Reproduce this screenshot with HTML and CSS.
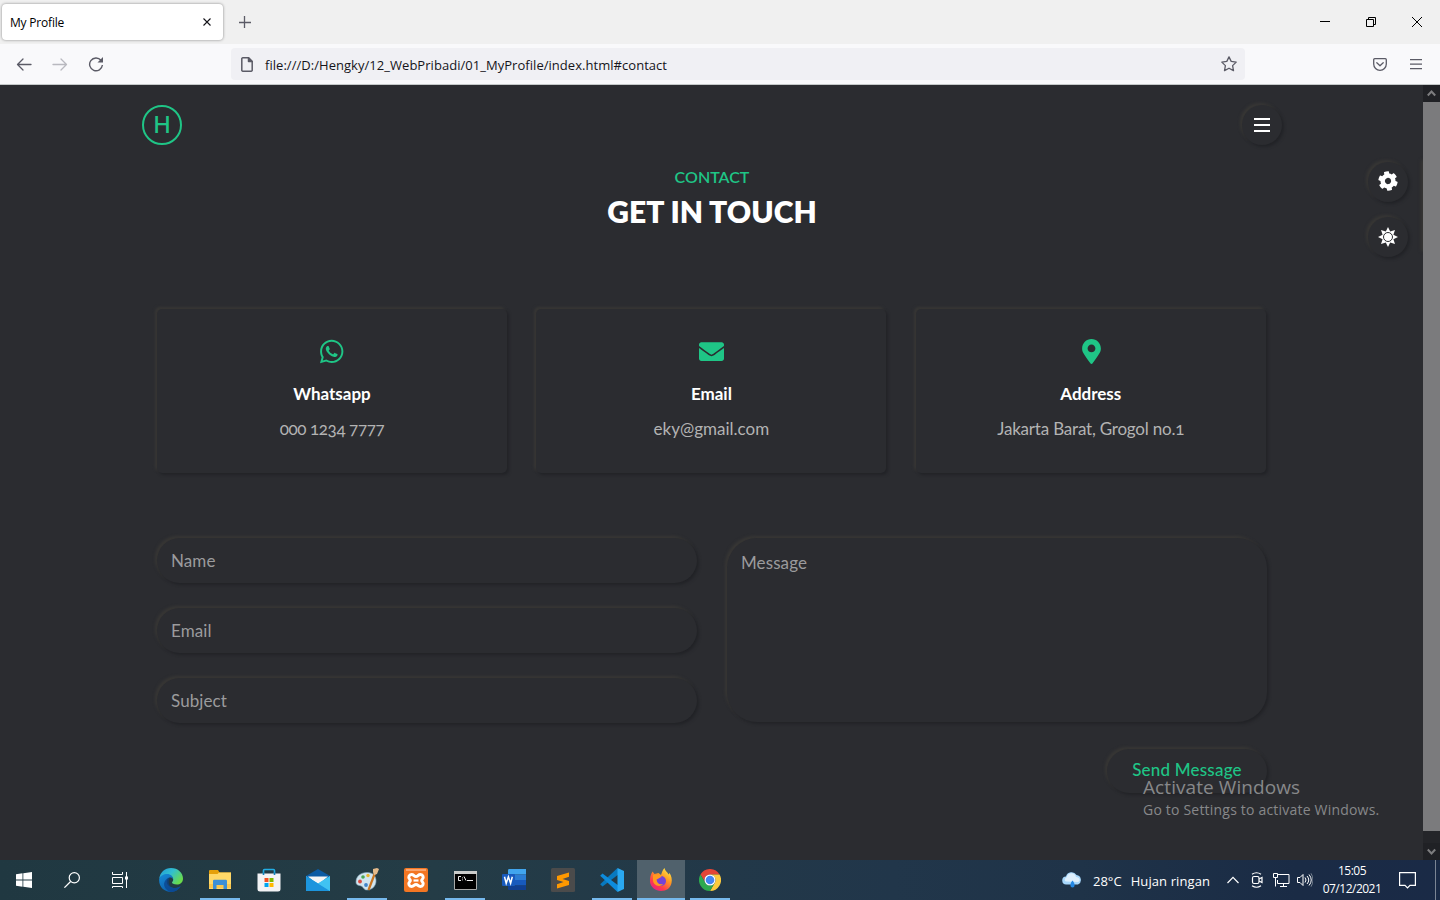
FILE: index.html
```html
<!DOCTYPE html>
<html lang="en">
<head>
<meta charset="utf-8">
<title>My Profile</title>
<link rel="stylesheet" href="styles.css">
</head>
<body>
<div class="tabbar">
  <div class="tab"><span class="tab-title">My Profile</span>
    <svg width="8" height="8" viewBox="0 0 8 8" stroke="#15141a" stroke-width="1.1"><path d="M.5.5l7 7M7.5.5l-7 7"/></svg>
  </div>
  <svg class="newtab" width="12" height="12" viewBox="0 0 12 12" stroke="#5b5b66" stroke-width="1.3"><path d="M5.500 0v12M0 6.500h12"/></svg>
  <div class="wincontrols">
    <svg width="10" height="10" viewBox="0 0 10 10" fill="none" stroke="#000"><path d="M0 4.5h10"/></svg>
    <svg width="10" height="10" viewBox="0 0 10 10" fill="none" stroke="#000"><path d="M.5 2.5h7v7h-7zM2.5 2.500v-2h7v7h-2"/></svg>
    <svg width="10" height="10" viewBox="0 0 10 10" fill="none" stroke="#000"><path d="M0 0l10 10M10 0L0 10"/></svg>
  </div>
</div>
<div class="toolbar">
  <div class="nav">
    <svg width="16" height="16" viewBox="0 0 16 16" fill="none" stroke="#5b5b66" stroke-width="1.3" stroke-linecap="round" stroke-linejoin="round"><path d="M15 8.500H1.500M7 3L1.500 8.500 7 14"/></svg>
    <svg width="16" height="16" viewBox="0 0 16 16" fill="none" stroke="#b9b9bf" stroke-width="1.3" stroke-linecap="round" stroke-linejoin="round"><path d="M1 8.500h13.500M9 3l5.500 5.500L9 14"/></svg>
    <svg width="16" height="16" viewBox="0 0 16 16" fill="none" stroke="#5b5b66" stroke-width="1.4"><path d="M13 4.300A6.400 6.400 0 1 0 14.400 9"/><path d="M15 1v5.500H9.500z" fill="#5b5b66" stroke="none"/></svg>
  </div>
  <div class="urlbar">
    <svg width="12" height="15" viewBox="0 0 12 15" fill="none" stroke="#5b5b66" stroke-width="1.5" stroke-linejoin="round"><path d="M.8 2a1 1 0 0 1 1-1.200H7.500L11.200 4.500V13a1 1 0 0 1-1 1.200H1.800a1 1 0 0 1-1-1.200z"/><path d="M7.500.8v3.700h3.700z" fill="#5b5b66"/></svg>
    <span class="url">file:///D:/Hengky/12_WebPribadi/01_MyProfile/index.html#contact</span>
    <svg class="star" width="16" height="16" viewBox="0 0 16 16" fill="none" stroke="#5b5b66" stroke-width="1.3" stroke-linejoin="round"><path d="M8 .9l2.200 4.500 5 .7-3.600 3.500.9 5L8 12.200 3.500 14.600l.9-5L.8 6.100l5-.7z"/></svg>
  </div>
  <div class="tools">
    <svg width="14" height="13" viewBox="0 0 14 13" fill="none" stroke="#5b5b66" stroke-width="1.300" stroke-linecap="round" stroke-linejoin="round"><path d="M1.700.7h10.600a1 1 0 0 1 1 1V6a6.300 6.300 0 0 1-12.600 0V1.700a1 1 0 0 1 1-1z"/><path d="M3.800 4.800L7 7.800l3.200-3"/></svg>
    <svg width="12" height="11" viewBox="0 0 12 11" stroke="#5b5b66" stroke-width="1.300"><path d="M0 .7h12M0 5.200h12M0 9.700h12"/></svg>
  </div>
</div>
<div class="viewport">
  <main class="page">
    <header class="header">
      <div class="logo">H</div>
      <div class="round"><span class="burger"></span></div>
    </header>
    <div class="heading"><p class="eyebrow">CONTACT</p><h1>GET IN TOUCH</h1></div>
    <section class="cards">
      <article class="card">
        <svg width="24" height="27" viewBox="0 0 460 512" fill="#1fc586"><path d="M380.900 97.100C339 55.100 283.200 32 223.900 32c-122.400 0-222 99.600-222 222 0 39.100 10.200 77.300 29.600 111L0 480l117.700-30.900c32.400 17.700 68.900 27 106.100 27h.1c122.300 0 224.100-99.600 224.100-222 0-59.300-25.200-115-67.100-157zm-157 341.600c-33.200 0-65.700-8.900-94-25.700l-6.700-4-69.800 18.300L72 359.200l-4.400-7c-18.500-29.400-28.200-63.300-28.200-98.200 0-101.700 82.800-184.500 184.600-184.500 49.300 0 95.600 19.200 130.400 54.100 34.800 34.900 56.200 81.200 56.100 130.500 0 101.800-84.900 184.600-186.600 184.600zm101.200-138.200c-5.500-2.800-32.800-16.200-37.900-18-5.100-1.900-8.800-2.800-12.500 2.800-3.700 5.600-14.300 18-17.600 21.800-3.200 3.700-6.500 4.200-12 1.400-32.600-16.300-54-29.100-75.500-66-5.700-9.800 5.700-9.100 16.300-30.300 1.800-3.700.9-6.900-.5-9.700-1.400-2.800-12.500-30.100-17.100-41.200-4.500-10.800-9.100-9.300-12.500-9.500-3.200-.2-6.900-.2-10.600-.2-3.700 0-9.700 1.400-14.800 6.900-5.100 5.600-19.400 19-19.400 46.300 0 27.300 19.900 53.700 22.600 57.400 2.800 3.700 39.100 59.700 94.800 83.800 35.200 15.200 49 16.500 66.600 13.900 10.700-1.600 32.800-13.400 37.400-26.400 4.600-13 4.600-24.100 3.200-26.400-1.300-2.500-5-3.900-10.500-6.600z"/></svg>
        <h2 class="whatsapp">Whatsapp</h2><p class="phone">000 1234 7777</p>
      </article>
      <article class="card">
        <svg width="25" height="27" viewBox="0 0 512 512" fill="#1fc586"><path d="M502.300 190.800c3.900-3.100 9.700-.2 9.700 4.700V400c0 26.500-21.500 48-48 48H48c-26.500 0-48-21.500-48-48V195.600c0-5 5.700-7.800 9.700-4.700 22.400 17.400 52.100 39.500 154.100 113.600 21.100 15.400 56.700 47.800 92.200 47.600 35.700.3 72-32.800 92.300-47.600 102-74.100 131.600-96.300 154-113.700zM256 320c23.200.4 56.600-29.200 73.400-41.400 132.700-96.300 142.800-104.700 173.400-128.700 5.800-4.500 9.200-11.500 9.200-18.900v-19c0-26.500-21.500-48-48-48H48c-26.500 0-48 21.500-48 48v19c0 7.400 3.400 14.300 9.200 18.900 30.600 23.900 40.700 32.400 173.400 128.700 16.800 12.200 50.200 41.800 73.400 41.400z"/></svg>
        <h2>Email</h2><p>eky@gmail.com</p>
      </article>
      <article class="card">
        <svg width="20" height="25" viewBox="-20 0 404 512" class="pin" fill="#1fc586"><path d="M172.300 501.700C27 291 0 269.400 0 192 0 86 86 0 192 0s192 86 192 192c0 77.400-27 99-172.300 309.700-9.500 13.800-29.900 13.800-39.400 0zM192 272c44.200 0 80-35.800 80-80s-35.800-80-80-80-80 35.800-80 80 35.800 80 80 80z"/></svg>
        <h2>Address</h2><p class="street">Jakarta Barat, Grogol no.<span class="old">1</span></p>
      </article>
    </section>
    <form class="form">
      <div class="fields">
        <div class="field">Name</div><div class="field">Email</div><div class="field">Subject</div>
      </div>
      <div class="message">Message</div>
    </form>
    <div class="actions"><div class="send">Send Message</div></div>
    <div class="switches">
      <div class="round gear"><svg width="20" height="20" viewBox="0 0 512 512" fill="#fff"><path d="M487.400 315.700l-42.600-24.600c4.300-23.200 4.300-47 0-70.200l42.600-24.600c4.900-2.800 7.100-8.600 5.500-14-11.100-35.600-30-67.800-54.700-94.600-3.800-4.100-10-5.100-14.800-2.300L380.800 110c-17.900-15.400-38.500-27.300-60.800-35.100V25.800c0-5.600-3.900-10.500-9.400-11.700-36.700-8.200-74.300-7.800-109.200 0-5.500 1.200-9.400 6.100-9.400 11.700V75c-22.200 7.900-42.800 19.800-60.800 35.100L88.700 85.500c-4.900-2.800-11-1.900-14.800 2.300-24.700 26.700-43.600 58.900-54.700 94.600-1.700 5.400.6 11.200 5.500 14L67.300 221c-4.300 23.200-4.300 47 0 70.200l-42.600 24.600c-4.900 2.800-7.100 8.600-5.500 14 11.100 35.600 30 67.800 54.700 94.600 3.800 4.100 10 5.100 14.800 2.300l42.600-24.600c17.900 15.400 38.500 27.300 60.800 35.100v49.200c0 5.600 3.900 10.500 9.400 11.700 36.700 8.200 74.300 7.800 109.200 0 5.500-1.200 9.400-6.100 9.400-11.700v-49.200c22.200-7.900 42.800-19.800 60.800-35.100l42.600 24.600c4.900 2.800 11 1.900 14.800-2.300 24.700-26.700 43.600-58.900 54.700-94.600 1.500-5.500-.7-11.300-5.600-14.100zM256 336c-44.100 0-80-35.900-80-80s35.900-80 80-80 80 35.900 80 80-35.900 80-80 80z" transform="rotate(-10 256 256)"/></svg></div>
      <div class="round"><svg width="20" height="20" viewBox="0 0 20 20"><path fill="#fff" d="M10 0l2.200 4.600L17 3l-1.600 4.800L20 10l-4.600 2.200L17 17l-4.800-1.600L10 20l-2.200-4.600L3 17l1.600-4.800L0 10l4.600-2.200L3 3l4.800 1.600z"/><circle cx="10" cy="10" r="4.500" fill="#fff" stroke="#2b2c30"/></svg></div>
    </div>
    <div class="drawer"></div>
  </main>
  <div class="scrollbar">
    <div class="arrow"><svg width="9" height="7" viewBox="0 0 9 7" fill="none" stroke="#7d7d7f" stroke-width="2"><path d="M.8 5.500l3.700-4 3.700 4"/></svg></div>
    <div class="thumb"></div>
    <div class="arrow"><svg width="9" height="7" viewBox="0 0 9 7" fill="none" stroke="#7d7d7f" stroke-width="2"><path d="M.8 1.500l3.700 4 3.700-4"/></svg></div>
  </div>
</div>
<footer class="taskbar">
  <div class="apps">
    <div class="app"><svg width="16" height="16" viewBox="0 0 16 16" fill="#fff"><path d="M0 2.300L6.500 1.300v6.200H0zM7.300 1.200L16 0v7.500H7.300zM0 8.400h6.500v6.300L0 13.800zM7.300 8.400H16V16l-8.700-1.200z"/></svg></div>
    <div class="app"><svg width="16" height="16" viewBox="0 0 16 16" fill="none" stroke="#fff" stroke-width="1.200"><circle cx="10.300" cy="5.700" r="5.100"/><path d="M6.600 9.500L.4 15.700"/></svg></div>
    <div class="app"><svg width="16" height="16" viewBox="0 0 16 16" fill="none" stroke="#fff"><path d="M.5 0v2.500h10V0M.5 5.500h10v6H.5zM.5 16v-1.500h10V16M14.500 0v16"/><path d="M13 4.500h3v3h-3z" fill="#fff" stroke="none"/></svg></div>
    <div class="app"><svg width="24" height="24" viewBox="0 0 24 24"><defs><linearGradient id="eg" x1="0" y1="0" x2="1" y2=".6"><stop offset="0" stop-color="#2199d8"/><stop offset=".5" stop-color="#31bfd0"/><stop offset="1" stop-color="#69db4b"/></linearGradient><linearGradient id="eb" x1="0" y1="0" x2=".7" y2="1"><stop offset="0" stop-color="#168bd9"/><stop offset="1" stop-color="#0c59a4"/></linearGradient></defs><path fill="url(#eg)" d="M.2 11C.8 4.600 5.800 0 12 0c7 0 12 5 12 10.500 0 4-3 6-6 6-3.500 0-5-1.200-5-2 0-.6 1.200-1.200 1.200-3C14.200 8.500 11 7 8 7 4 7 1 9 .2 11z"/><path fill="url(#eb)" d="M.2 11C1 8 4.500 6 8.200 6c3.500 0 6 2.500 6 5.300-.6-1.200-1.700-1.800-3-1.800-2 0-3.500 2-3.500 4 0 4 4 6.500 8 6.500 2 0 4-.6 6-2C19.700 21.700 16 24 12 24 5 24-.5 18.500.2 11z"/><path fill="#0b438c" d="M11.200 9.500C8.500 12 9 20 15.500 20c2.500 0 4.500-.8 6.200-2-2 4-6 6.200-9.700 6-5-1.500-7.500-5.500-6.800-9 .6-3 3-5.300 6-5.500z" opacity=".75"/></svg></div>
    <div class="app open"><svg width="22" height="20" viewBox="0 0 22 20"><path fill="#e5a00b" d="M0 1a1 1 0 0 1 1-1h8l1.500 2.500H22V8H0z"/><path fill="#ffd868" d="M0 4h8.500L10 2.500h12V19H0z"/><path fill="#f9c64c" d="M0 14h22v4H0z"/><path fill="#3b8fd5" d="M4 11a1.200 1.200 0 0 1 1.200-1.200h11.600A1.200 1.200 0 0 1 18 11v8h-3.500v-4h-7v4H4z"/></svg></div>
    <div class="app"><svg width="24" height="24" viewBox="0 0 24 24"><path d="M6.500 8V2.500a1 1 0 0 1 1-1h9a1 1 0 0 1 1 1V8" fill="none" stroke="#22aee4" stroke-width="1.600"/><path fill="#f3f3f5" d="M.5 5.500h23V21a2.500 2.500 0 0 1-2.500 2.500H3A2.500 2.500 0 0 1 .5 21z"/><path d="M6.500 4.500V7M17.500 4.500V7" stroke="#1381b8" stroke-width="1.600"/><path fill="#f25022" d="M7.500 10H11.500v4h-4z"/><path fill="#7fba00" d="M12.500 10h4v4h-4z"/><path fill="#00a4ef" d="M7.500 15h4v4h-4z"/><path fill="#ffb900" d="M12.500 15h4v4h-4z"/></svg></div>
    <div class="app"><svg width="24" height="24" viewBox="0 0 24 24"><path fill="#0c5ba3" d="M0 8L12 1l12 7v6H0z"/><path fill="#f5f5f5" d="M2 8.500h20L12 17z"/><path fill="#32b7ed" d="M0 8l12 7.500L24 8v15H0z"/><path fill="#1c95dd" d="M0 8l24 15H0z"/><path fill="#4acbf5" d="M24 8L12 15.500 24 23z" opacity=".6"/></svg></div>
    <div class="app open"><svg width="24" height="24" viewBox="0 0 24 24"><path fill="#d2e5ef" stroke="#86a9bd" stroke-width=".6" d="M1 14C1 8 6 4.500 12 4.500c6 0 9 3.500 9 8.500s-4 9-9 9c-3 0-3-2-5-3.500S1 18 1 14z"/><circle cx="5" cy="13.500" r="1.900" fill="#d94b41"/><circle cx="8" cy="9" r="1.800" fill="#4aa654"/><circle cx="13" cy="7.500" r="1.700" fill="#eab52f"/><circle cx="11" cy="17" r="1.900" fill="#4084c9"/><path stroke="#c97521" stroke-width="2.200" d="M20 5l-6.500 17"/><path fill="#e3b98a" d="M18 1l4-1 2 1-2 5-3 1-1-3z"/></svg></div>
    <div class="app"><svg width="24" height="24" viewBox="0 0 24 24"><rect width="24" height="24" rx="2" fill="#f37623"/><path d="M2 2h20" stroke="#ffc5a0" stroke-width="1.200"/><path d="M7.500 6.500c2.500 0 2.500 2 4.500 2s2-2 4.500-2 3.500 3 2 4.500c-1 1-1 2 0 3 1.500 1.500.5 4.500-2 4.500s-2.500-2-4.500-2-2 2-4.500 2-3.500-3-2-4.500c1-1 1-2 0-3-1.500-1.500-.5-4.500 2-4.500z" fill="none" stroke="#fff" stroke-width="3"/><path d="M9.500 12.500h5" stroke="#fff" stroke-width="2.200"/></svg></div>
    <div class="app open"><svg width="23" height="19" viewBox="0 0 23 19"><path fill="#000" stroke="#a9aaa9" d="M.5.5h22v18H.5z"/><path fill="#c9cbca" d="M0 0h23v3H0z"/><path d="M7 5.500H4.500v4H7M8.500 6.500v.8M8.500 8.500v.8M10 5.500l2 4M13 9.500h6" fill="none" stroke="#eee"/></svg></div>
    <div class="app"><svg width="24" height="22" viewBox="0 0 24 22"><path fill="#41a5ee" d="M6 1.200A1.200 1.200 0 0 1 7.200 0H24v5.500H6z"/><path fill="#2b7cd3" d="M6 5.500h18V11H6z"/><path fill="#185abd" d="M6 11h18v5.500H6z"/><path fill="#103f91" d="M6 16.500h18V21H7a1 1 0 0 1-1-1z"/><path fill="#185abd" d="M1 5h11a1 1 0 0 1 1 1v10a1 1 0 0 1-1 1H1a1 1 0 0 1-1-1V6a1 1 0 0 1 1-1z"/><path d="M2.500 7.800l1.700 6.500 2.200-6.500 2.200 6.500 1.700-6.500" fill="none" stroke="#fff" stroke-width="1.500"/></svg></div>
    <div class="app"><svg width="24" height="24" viewBox="0 0 24 24"><rect width="24" height="24" rx="1.500" fill="#4b4b4b"/><path fill="#ff9800" d="M6 8L18 4.500v4.300L11.500 11 18 13v4L6 20.500v-4.300L12.500 14 6 12z"/></svg></div>
    <div class="app open"><svg width="24" height="24" viewBox="0 0 24 24"><path fill="#0879bf" d="M17.500 0L19 6 2.500 18.500.2 16.300z"/><path fill="#0d8bdc" d="M2.500 5.500L19 18l-1.500 6L.2 7.700z"/><path fill="#2aa9f2" d="M17.500 0L24 3v18l-6.500 3z"/></svg></div>
    <div class="app open active"><svg width="24" height="24" viewBox="0 0 24 24"><defs><linearGradient id="fx" x1=".9" y1="0" x2=".2" y2="1"><stop offset="0" stop-color="#fff44f"/><stop offset=".4" stop-color="#ff9a22"/><stop offset=".75" stop-color="#ff3b4c"/><stop offset="1" stop-color="#e3208b"/></linearGradient></defs><path fill="url(#fx)" d="M3.500 3.500L5.500 6l4-1L12 7c1-3 1.500-5 3.500-7 .5 3 3 4 4 6.500L20.500 5c2 3 2.800 6 2 10-1 5-5 8-10.500 8S1.500 19 1 14c-.3-4 .5-7 2.500-10.500z"/><circle cx="12" cy="13" r="5" fill="#7543d7"/><path fill="#ff9a1f" d="M4 7c4-1 7 0 9 2-2 0-3 1.500-5.500 2.500C8 15 10 17 14 16c-3 4-10 1.500-10-4z"/></svg></div>
    <div class="app open"><svg width="22" height="22" viewBox="0 0 24 24"><path fill="#e34537" d="M1.600 6A12 12 0 0 1 22.400 6H12a6 6 0 0 0-5.200 9z"/><path fill="#fbca3e" d="M22.400 6A12 12 0 0 1 12 24l5.200-9A6 6 0 0 0 12 6z"/><path fill="#2da94f" d="M12 24A12 12 0 0 1 1.600 6l5.200 9a6 6 0 0 0 10.400 0z"/><circle cx="12" cy="12" r="6" fill="#fff"/><circle cx="12" cy="12" r="4.700" fill="#4285f4"/></svg></div>
  </div>
  <div class="tray">
    <svg width="21" height="16" viewBox="0 0 21 16"><path fill="#a7d7fb" d="M4.500 12.500a4 4 0 0 1-.5-8A5.800 5.800 0 0 1 14.500 3 5 5 0 0 1 16 12.500z"/><path fill="#deeffc" d="M4.500 9.500C2 9.500 2.500 6 4.500 5.500 6 0 13 0 14 5c4 0 5 4 2 5z"/><path fill="#2387e3" d="M10.500 8.500c3 3.500 2.500 7 0 7s-3-3.500 0-7z"/></svg>
    <span class="weather"><span>28°C</span><span class="sky">Hujan ringan</span></span>
    <svg class="chev" width="12" height="8" viewBox="0 0 12 8" fill="none" stroke="#fff" stroke-width="1.200"><path d="M.5 7L6 1.300 11.500 7"/></svg>
    <svg class="cam" width="12" height="16" viewBox="0 0 12 16" fill="none" stroke="#fff" stroke-width="1.200"><rect x="1.500" y="4.500" width="6.500" height="7" rx="1.500"/><path d="M8 7l3-1.500v5L8 9M1 2.300Q5.500-.8 10 2.300M1 13.700q4.500 3.100 9 0"/></svg>
    <svg class="net" width="17" height="14" viewBox="0 0 17 14" fill="none" stroke="#fff"><path d="M5 1.500h11v9H4.500V7M10.500 10.500v3M7 13.500h7M.5.500h4v4h-4zM2.500 4.500v9"/></svg>
    <svg class="sound" width="16" height="14" viewBox="0 0 16 14" fill="none" stroke="#fff"><path d="M.5 4.500H3l3-3v11l-3-3H.5zM8 4.500q2 2.500 0 5M10 3q3.500 4 0 8M12 1.500q4.500 5.500 0 11"/><path d="M14 .3q4 6.700 0 13.400" stroke="#75808e"/></svg>
    <div class="clock"><span>15:05</span><span>07/12/2021</span></div>
    <svg class="note" width="17" height="17" viewBox="0 0 17 17" fill="none" stroke="#fff" stroke-width="1.200"><path d="M.6.6h15.800v12.800H11L8.500 16 6 13.400H.6z"/></svg>
    <span class="peek"></span>
  </div>
</footer>
<div class="watermark"><p class="wm-title">Activate Windows</p><p class="wm-sub">Go to Settings to activate Windows.</p></div>
</body>
</html>
```
FILE: styles.css
```css
* { box-sizing: border-box; margin: 0; padding: 0; }
body { width: 1440px; height: 900px; overflow: hidden; position: relative; display: flex; flex-direction: column; font-family: "Open Sans", "Noto Sans", sans-serif; background: #2b2c30; }
svg { display: block; flex: none; }

.tabbar { height: 44px; background: #f0f0f0; display: flex; align-items: center; padding-left: 2px; }
.tab { width: 221px; height: 36px; background: #fff; border-radius: 4px; box-shadow: 0 0 3px rgba(0,0,0,.45); display: flex; align-items: center; justify-content: space-between; padding: 0 12px 0 8px; font-size: 12px; color: #000; }
.tab-title { letter-spacing: -.2px; padding-top: 1px; }
.newtab { margin-left: 16px; }
.wincontrols { margin-left: auto; display: flex; gap: 36px; padding-right: 18px; }

.toolbar { height: 41px; background: #f9f9fb; border-bottom: 1px solid #c5c9c9; display: flex; align-items: center; }
.nav { display: flex; gap: 20px; padding-left: 16px; width: 231px; }
.urlbar { width: 1014px; height: 32px; background: #f0f0f4; border-radius: 4px; display: flex; align-items: center; padding: 0 8px 0 10px; }
.url { margin-left: 12px; padding-top: 1px; font-size: 13px; color: #15141a; letter-spacing: .04px; white-space: nowrap; }
.star { margin-left: auto; }
.tools { margin-left: 128px; display: flex; align-items: center; gap: 23px; }

.viewport { height: 775px; display: flex; }
.page { width: 1423px; height: 775px; position: relative; overflow: hidden; background: #2b2c30; padding: 20px 141px 0 142px; font-family: Lato, "Open Sans", sans-serif; color: #fff; font-size: 17px; }
.header { height: 40px; display: flex; justify-content: space-between; }
.logo { width: 40px; height: 40px; border: 2px solid #1fc586; border-radius: 50%; color: #1fc586; font: 500 23px/37px Inter, sans-serif; text-align: center; }
.round, .card, .field, .message, .send { background: #2b2c30; box-shadow: 2px 2px 3px #222327, -2px -2px 3px #383735; }
.round { width: 40px; height: 40px; border-radius: 50%; display: flex; align-items: center; justify-content: center; }
.burger { width: 16px; height: 14px; border-top: 2px solid #fff; border-bottom: 2px solid #fff; background: linear-gradient(#fff, #fff) center / 16px 2px no-repeat; }
.heading { margin-top: 20px; height: 144px; text-align: center; }
.eyebrow { color: #1fc586; font-size: 16px; line-height: 24px; font-weight: 600; }
h1 { font-size: 30px; line-height: 36px; margin-top: 4px; font-weight: 800; }
.cards { display: flex; gap: 29.400px; padding: 0 15px; }
.card { width: 350px; height: 164px; border-radius: 5px; display: flex; flex-direction: column; align-items: center; padding-top: 29px; }
.card .pin { margin: 1px 0; }
.card h2 { font-size: 17px; line-height: 24px; margin-top: 17px; font-weight: 700; }
.card p { line-height: 24px; margin-top: 11px; color: #b3b3b3; }
.card .phone { letter-spacing: -.4px; font-variant-numeric: oldstyle-nums; }
.card .street { letter-spacing: -.2px; }
.old { font-variant-numeric: oldstyle-nums; }
.form { display: flex; gap: 30px; padding: 0 15px; margin-top: 65px; color: #9b9b9d; }
.fields { display: flex; flex-direction: column; gap: 25px; width: 540px; }
.field { height: 45px; border-radius: 23px; padding-left: 14px; line-height: 45px; letter-spacing: .1px; }
.message { width: 540px; height: 184px; border-radius: 30px; padding: 13px 14px; line-height: 24px; letter-spacing: .1px; }
.actions { display: flex; justify-content: flex-end; padding-right: 15px; margin-top: 26px; }
.send { width: 160px; height: 44px; border-radius: 22px; color: #1fc586; text-align: center; line-height: 41px; font-weight: 500; letter-spacing: .2px; }
.switches { position: absolute; left: 1368px; top: 77px; display: flex; flex-direction: column; gap: 15px; }
.gear { padding-bottom: 2px; }
.drawer { position: absolute; left: 1424px; top: 77px; width: 200px; height: 91px; box-shadow: -3px -2px 3px #373634; }
.scrollbar { width: 17px; background: #242529; display: flex; flex-direction: column; }
.arrow { height: 17px; background: #202125; display: flex; align-items: center; justify-content: center; }
.thumb { height: 729px; margin-bottom: 12px; background: #7b7b7d; }

.taskbar { height: 40px; display: flex; justify-content: space-between; background: linear-gradient(90deg, #203841 0, #243c46 30%, #21364a 62%, #1f3348 75%, #1a2b45 90%, #1a2a46 100%); color: #fff; }
.apps { display: flex; }
.app { width: 48px; height: 40px; margin-right: 1px; display: flex; align-items: center; justify-content: center; position: relative; }
.app:nth-child(-n+2) { margin-right: 0; }
.app:nth-child(3) { margin-right: 3px; }
.app.open::after { content: ""; position: absolute; left: 4px; right: 4px; bottom: 0; height: 2px; background: #76b9ed; }
.app.active { background: #50616c; }
.app.active::after { left: 0; right: 0; }
.tray { display: flex; align-items: center; width: 378px; }
.weather { margin-left: 10px; padding-top: 1px; font-size: 13px; white-space: nowrap; width: 124px; display: flex; gap: 9px; }
.sky { letter-spacing: .1px; }
.chev { margin-left: 10px; }
.cam { margin-left: 12px; }
.net { margin-left: 10px; }
.sound { margin-left: 7px; }
.clock { width: 64px; margin-left: 7px; display: flex; flex-direction: column; text-align: center; font-size: 12px; line-height: 18px; letter-spacing: -.5px; }
.note { margin-left: 15px; }
.peek { width: 1px; height: 40px; margin-left: 19px; background: #7b8594; }
.watermark { position: absolute; left: 1143px; top: 775px; color: #87888a; white-space: nowrap; }
.wm-title { font-size: 19px; line-height: 25px; letter-spacing: .08px; }
.wm-sub { font-size: 14px; line-height: 20px; letter-spacing: .2px; }
```
